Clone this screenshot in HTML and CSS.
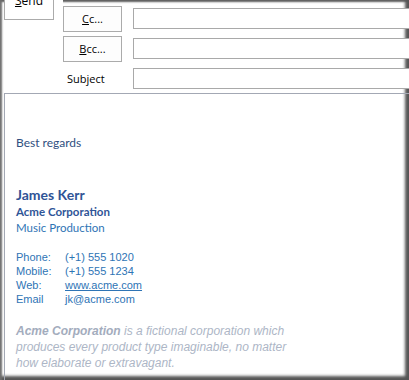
FILE: index.html
```html
<!DOCTYPE html>
<html lang="en">
<head>
  <meta charset="UTF-8">
  <title>Message</title>
  <link rel="stylesheet" href="styles.css">
</head>
<body>
  <div class="window">
    <div class="header">
      <div class="send-cell">
        <button type="button" class="send"><u>S</u>end</button>
      </div>
      <div class="fields">
        <div class="row">
          <button type="button" class="addr"><u>C</u>c...</button>
          <input type="text" class="field">
        </div>
        <div class="row">
          <button type="button" class="addr"><u>B</u>cc...</button>
          <input type="text" class="field">
        </div>
        <div class="row">
          <label class="subject-label">Subject</label>
          <input type="text" class="field">
        </div>
      </div>
    </div>

    <div class="message">
      <p class="regards">Best regards</p>
      <p class="name">James Kerr</p>
      <p class="company">Acme Corporation</p>
      <p class="dept">Music Production</p>

      <table class="contact">
        <tr><td class="key">Phone:</td><td>(+1) 555 1020</td></tr>
        <tr><td class="key">Mobile:</td><td>(+1) 555 1234</td></tr>
        <tr><td class="key">Web:</td><td><a href="#">www.acme.com</a></td></tr>
        <tr><td class="key">Email</td><td>jk@acme.com</td></tr>
      </table>

      <p class="blurb"><b>Acme Corporation</b> is a fictional corporation which produces every product type imaginable, no matter how elaborate or extravagant.</p>
    </div>
  </div>
</body>
</html>
```

FILE: styles.css
```css
body { margin:0; background:#fff; }
.window { width:409px; height:380px; position:relative; overflow:hidden; background:#fff; box-sizing:border-box; display:flex; flex-direction:column; box-shadow:inset 3px 0 2px -1px #6e6e6e, inset -5px 0 3px -1px #555, inset 0 -5px 3px -1px #555, inset 0 3px 2px -1px #5e5e5e; font-family:"Open Sans", "Noto Sans", sans-serif; font-size:11px; color:#000; }

.header { display:flex; height:93px; }
.send-cell { width:59px; margin-left:4px; background:#fff; }
.send { display:block; width:50px; height:40px; margin-top:-20px; padding:0; border:1px solid #ababab; background:#fff; font:inherit; font-size:12px; color:#000; line-height:40px; text-align:center; }
.send u, .addr u { text-decoration:underline; }

.fields { flex:1; display:flex; flex-direction:column; padding-top:6px; gap:5px; }
.row { display:flex; align-items:center; height:25px; gap:11px; }
.addr { width:59px; height:26px; border:1px solid #ababab; background:#fdfdfd; font:inherit; font-size:11px; padding:0; color:#000; }
.subject-label { width:59px; padding-left:4px; box-sizing:border-box; font-size:11px; }
.field { flex:1; height:21px; box-sizing:border-box; border:1px solid #a9a9a9; margin-right:-10px; padding:0; background:#fff; }

.message { flex:1; margin-left:4px; border-top:1px solid #a3a8b4; border-left:1px solid #a3a8b4; padding:41px 0 0 11px; }
.message p { margin:0; }
.regards { font-family:Lato, sans-serif; font-size:12px; line-height:16px; color:#2f4f80; }
.name { margin-top:35px !important; font-family:Lato, sans-serif; font-weight:bold; font-size:14px; line-height:18px; color:#2f5496; }
.company { font-family:Lato, sans-serif; font-weight:bold; font-size:11.5px; line-height:16px; color:#2f5597; }
.dept { font-family:Lato, sans-serif; font-size:11.5px; line-height:16px; color:#2e74b5; }

.contact { margin-top:14px; border-collapse:collapse; font-family:"Liberation Sans", Arial, sans-serif; font-size:11px; color:#2e74b5; }
.contact td { padding:0; line-height:14px; }
.contact .key { width:49px; }
.contact a { color:#2e74b5; }

.blurb { margin-top:17px !important; width:290px; font-family:"Liberation Sans", Arial, sans-serif; font-style:italic; font-size:12px; line-height:16px; color:#adb6c6; }
.blurb b { color:#a3acbd; }
```
